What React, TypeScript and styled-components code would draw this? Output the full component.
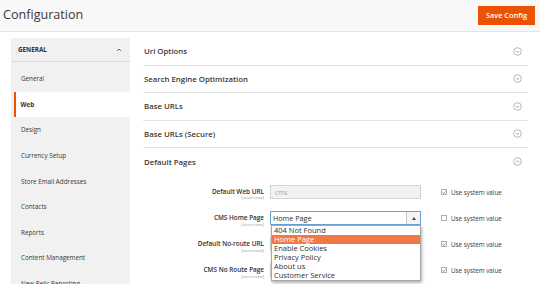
import styled, { createGlobalStyle } from "styled-components";

const GlobalStyle = createGlobalStyle`
  html, body {
    margin: 0;
    padding: 0;
    background: #ffffff;
    font-family: "Open Sans", "Liberation Sans", sans-serif;
    color: #303030;
  }
  * { box-sizing: border-box; }
`;

const Page = styled.div`
  width: 540px;
  height: 284px;
  overflow: hidden;
  background: #ffffff;
`;

const Header = styled.header`
  height: 32px;
  display: flex;
  align-items: center;
  justify-content: space-between;
  padding: 0 5px 2px 3px;
  background: #f8f8f8;
  border-bottom: 1px solid #e3e3e3;
`;

const PageTitle = styled.h1`
  margin: 0;
  font-size: 12.6px;
  font-weight: 400;
  color: #41362f;
`;

const SaveButton = styled.button`
  width: 57px;
  height: 19px;
  border: none;
  background: #eb5202;
  color: #ffffff;
  font-family: inherit;
  font-size: 7.4px;
  font-weight: 600;
  padding: 0;
  margin-top: 1px;
`;

const Body = styled.div`
  display: flex;
  align-items: flex-start;
  padding: 6px 12px 0 11px;
  gap: 13px;
`;

const Sidebar = styled.nav`
  width: 119px;
  flex: none;
  background: #f1f1f1;
  height: 260px;
`;

const SideHead = styled.div`
  height: 24px;
  display: flex;
  align-items: center;
  justify-content: space-between;
  padding: 0 8px 0 7px;
  border-bottom: 1px solid #dcdcdc;
  font-size: 6.3px;
  font-weight: 700;
  color: #303030;
`;

const SideList = styled.ul`
  list-style: none;
  margin: 0;
  padding: 4px 0 0;
`;

const SideItem = styled.li<{ $active?: boolean }>`
  height: 25.6px;
  display: flex;
  align-items: center;
  font-size: 6.3px;
  color: #41362f;
  font-weight: ${(p) => (p.$active ? 700 : 400)};
  background: ${(p) => (p.$active ? "#ffffff" : "transparent")};
  margin-left: ${(p) => (p.$active ? "3px" : "0")};
  padding-left: ${(p) => (p.$active ? "4.5px" : "10px")};
  border-left: ${(p) => (p.$active ? "2.5px solid #eb5202" : "none")};
`;

const Main = styled.main`
  flex: 1;
  min-width: 0;
`;

const Section = styled.div<{ $open?: boolean }>`
  height: 27.5px;
  display: flex;
  align-items: center;
  justify-content: space-between;
  padding-right: 6px;
  border-bottom: ${(p) => (p.$open ? "none" : "1px solid #e3e3e3")};
`;

const SectionTitle = styled.span`
  font-size: 7.8px;
  font-weight: 600;
  color: #41362f;
  padding-left: 1px;
`;

const Form = styled.div`
  padding-top: 9.5px;
  display: flex;
  flex-direction: column;
  gap: 10.5px;
`;

const Row = styled.div`
  display: grid;
  grid-template-columns: 121px 151px 1fr;
  column-gap: 6px;
  align-items: start;
`;

const LabelBox = styled.div`
  text-align: right;
  line-height: 1;
  padding-top: 3.5px;
`;

const LabelText = styled.div`
  font-size: 6.4px;
  font-weight: 600;
  color: #303030;
`;

const Scope = styled.div`
  font-size: 4.2px;
  color: #999999;
  margin-top: 1.5px;
`;

const Control = styled.div`
  position: relative;
`;

const TextInput = styled.div`
  height: 14px;
  border: 1px solid #d4d4d4;
  background: #f2f2f2;
  color: #a8a8a8;
  font-size: 6.6px;
  display: flex;
  align-items: center;
  padding-left: 4px;
`;

const SelectBox = styled.div`
  height: 14px;
  border: 1px solid #6aa2d4;
  background: #ffffff;
  display: flex;
  align-items: stretch;
  font-size: 7.2px;
  color: #303030;
`;

const SelectValue = styled.span`
  flex: 1;
  display: flex;
  align-items: center;
  padding-left: 2px;
`;

const SelectArrow = styled.span`
  width: 14px;
  border-left: 1px solid #c9c9c9;
  background: #f4f4f4;
  display: flex;
  align-items: center;
  justify-content: center;
`;

const Dropdown = styled.ul`
  position: absolute;
  top: 14px;
  left: 1px;
  right: 0;
  margin: 0;
  padding: 0 0 1px;
  list-style: none;
  background: #ffffff;
  border: 1px solid #a6a6a6;
  box-shadow: 1px 2px 3px rgba(0, 0, 0, 0.3);
  z-index: 2;
`;

const Option = styled.li<{ $selected?: boolean }>`
  height: 8.9px;
  line-height: 8.9px;
  padding-left: 2px;
  font-size: 7.5px;
  color: ${(p) => (p.$selected ? "#ffffff" : "#303030")};
  background: ${(p) => (p.$selected ? "#f07746" : "transparent")};
`;

const UseDefault = styled.label`
  display: flex;
  align-items: center;
  gap: 4px;
  height: 14px;
  margin-left: 14px;
  font-size: 6.3px;
  color: #41362f;
`;

const Check = styled.span`
  width: 6px;
  height: 6px;
  border: 0.8px solid #adadad;
  background: #ffffff;
  display: flex;
  align-items: center;
  justify-content: center;
`;

const CircleIcon = ({ up }: { up?: boolean }) => (
  <svg width="9" height="9" viewBox="0 0 9 9">
    <circle cx="4.5" cy="4.5" r="3.8" fill="none" stroke="#9a9a9a" strokeWidth="0.7" />
    <path
      d={up ? "M3 5.3 L4.5 3.8 L6 5.3" : "M3 3.9 L4.5 5.4 L6 3.9"}
      fill="none"
      stroke="#7a7a7a"
      strokeWidth="0.7"
    />
  </svg>
);

const CheckBox = ({ checked }: { checked?: boolean }) => (
  <Check>
    {checked && (
      <svg width="5" height="5" viewBox="0 0 5 5">
        <path d="M0.8 2.6 L2 3.8 L4.3 1.1" fill="none" stroke="#514943" strokeWidth="0.8" />
      </svg>
    )}
  </Check>
);

const sideItems = [
  "General",
  "Web",
  "Design",
  "Currency Setup",
  "Store Email Addresses",
  "Contacts",
  "Reports",
  "Content Management",
  "New Relic Reporting",
];

const sections = ["Url Options", "Search Engine Optimization", "Base URLs", "Base URLs (Secure)"];

const pageOptions = [
  "404 Not Found",
  "Home Page",
  "Enable Cookies",
  "Privacy Policy",
  "About us",
  "Customer Service",
];

const App = () => {
  return (
    <Page>
      <GlobalStyle />
      <Header>
        <PageTitle>Configuration</PageTitle>
        <SaveButton>Save Config</SaveButton>
      </Header>
      <Body>
        <Sidebar>
          <SideHead>
            GENERAL
            <svg width="6" height="4" viewBox="0 0 6 4">
              <path d="M1 3 L3 1 L5 3" fill="none" stroke="#514943" strokeWidth="0.8" />
            </svg>
          </SideHead>
          <SideList>
            {sideItems.map((item) => (
              <SideItem key={item} $active={item === "Web"}>
                {item}
              </SideItem>
            ))}
          </SideList>
        </Sidebar>
        <Main>
          {sections.map((s) => (
            <Section key={s}>
              <SectionTitle>{s}</SectionTitle>
              <CircleIcon />
            </Section>
          ))}
          <Section $open>
            <SectionTitle>Default Pages</SectionTitle>
            <CircleIcon up />
          </Section>
          <Form>
            <Row>
              <LabelBox>
                <LabelText>Default Web URL</LabelText>
                <Scope>[store view]</Scope>
              </LabelBox>
              <Control>
                <TextInput>cms</TextInput>
              </Control>
              <UseDefault>
                <CheckBox checked />
                Use system value
              </UseDefault>
            </Row>
            <Row>
              <LabelBox>
                <LabelText>CMS Home Page</LabelText>
                <Scope>[store view]</Scope>
              </LabelBox>
              <Control>
                <SelectBox>
                  <SelectValue>Home Page</SelectValue>
                  <SelectArrow>
                    <svg width="4" height="3" viewBox="0 0 4 3">
                      <path d="M0 3 L2 0 L4 3 Z" fill="#514943" />
                    </svg>
                  </SelectArrow>
                </SelectBox>
                <Dropdown>
                  {pageOptions.map((o) => (
                    <Option key={o} $selected={o === "Home Page"}>
                      {o}
                    </Option>
                  ))}
                </Dropdown>
              </Control>
              <UseDefault>
                <CheckBox />
                Use system value
              </UseDefault>
            </Row>
            <Row>
              <LabelBox>
                <LabelText>Default No-route URL</LabelText>
                <Scope>[store view]</Scope>
              </LabelBox>
              <Control>
                <TextInput />
              </Control>
              <UseDefault>
                <CheckBox checked />
                Use system value
              </UseDefault>
            </Row>
            <Row>
              <LabelBox>
                <LabelText>CMS No Route Page</LabelText>
                <Scope>[store view]</Scope>
              </LabelBox>
              <Control>
                <TextInput />
              </Control>
              <UseDefault>
                <CheckBox checked />
                Use system value
              </UseDefault>
            </Row>
          </Form>
        </Main>
      </Body>
    </Page>
  );
};

export default App;
